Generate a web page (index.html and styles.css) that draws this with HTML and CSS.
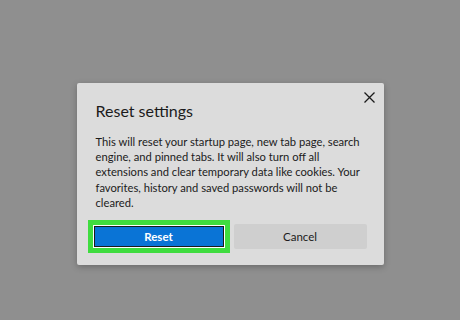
FILE: index.html
```html
<!DOCTYPE html>
<html lang="en">
<head>
    <meta charset="UTF-8">
    <meta name="viewport" content="width=device-width, initial-scale=1.0">
    <title>Reset settings</title>
    <link rel="stylesheet" href="styles.css">
</head>
<body>
    <div class="overlay">
        <div class="dialog">
            <button class="close" aria-label="Close">
                <svg width="11" height="11" viewBox="0 0 11 11">
                    <path d="M0.5 0.5 L10.5 10.5 M10.5 0.5 L0.5 10.5" stroke="#1b1b1b" stroke-width="1.3" fill="none"/>
                </svg>
            </button>
            <h1>Reset settings</h1>
            <p class="message">This will reset your startup page, new tab page, search engine, and pinned tabs. It will also turn off all extensions and clear temporary data like cookies. Your favorites, history and saved passwords will not be cleared.</p>
            <div class="actions">
                <div class="highlight">
                    <button class="btn btn-primary">Reset</button>
                </div>
                <button class="btn btn-secondary">Cancel</button>
            </div>
        </div>
    </div>
</body>
</html>
```

FILE: styles.css
```css
body {
    font-family: 'Lato', 'Noto Sans', sans-serif;
    background: #8f8f8f;
    margin: 0;
}

.overlay {
    width: 460px;
    height: 320px;
    display: flex;
    align-items: flex-start;
    justify-content: center;
    padding-top: 83px;
    box-sizing: border-box;
}

.dialog {
    width: 307px;
    background: #dcdcdc;
    box-shadow: 0 2px 6px rgba(0, 0, 0, 0.25);
    border-radius: 2px;
    padding: 17px 17px 12px 19px;
    box-sizing: border-box;
    position: relative;
}

.close {
    position: absolute;
    top: 6px;
    right: 6px;
    width: 16px;
    height: 16px;
    padding: 0;
    border: none;
    background: transparent;
    display: flex;
    align-items: center;
    justify-content: center;
}

h1 {
    font-size: 16px;
    font-weight: 400;
    color: #1b1b1b;
    margin: 0 0 12px;
    line-height: 22px;
}

.message {
    font-size: 11.2px;
    line-height: 15.2px;
    color: #1b1b1b;
    margin: 0 0 10px;
}

.actions {
    display: flex;
    align-items: center;
    gap: 4px;
    margin-left: -8px;
}

.highlight {
    border: 5px solid #3fdc3f;
    padding: 1px;
    background: #ffffff;
}

.btn {
    font-family: inherit;
    font-size: 11.5px;
    height: 25px;
    width: 133px;
    border: none;
    border-radius: 2px;
    cursor: pointer;
}

.btn-primary {
    display: block;
    width: 130px;
    height: 21px;
    background: #0a74d6;
    color: #ffffff;
    font-weight: 700;
    border: 1px solid #1b1b1b;
    border-radius: 0;
}

.btn-secondary {
    background: #cfcfcf;
    color: #1b1b1b;
}
```
